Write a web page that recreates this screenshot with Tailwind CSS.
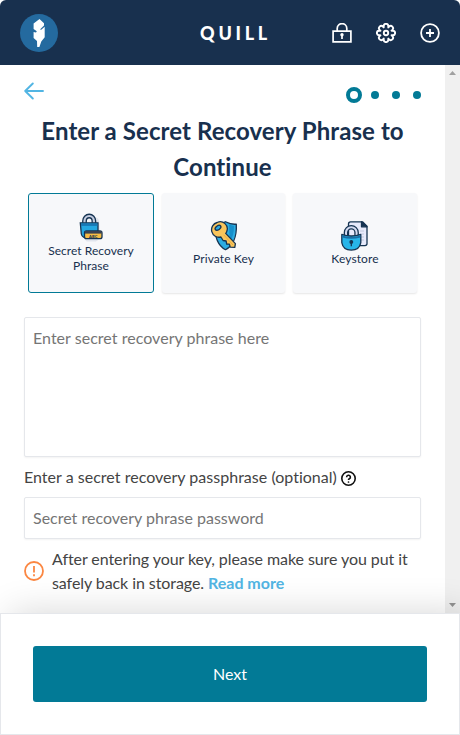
<!DOCTYPE html>
<html lang="en">
<head>
<meta charset="utf-8">
<title>Quill</title>
<script src="https://cdn.jsdelivr.net/npm/@tailwindcss/browser@4"></script>
</head>
<body class="bg-white font-[Lato,sans-serif] text-[#444] [font-variant-ligatures:none]">
<div class="flex h-[735px] w-[460px] flex-col overflow-hidden">
  <header class="grid h-[65px] shrink-0 grid-cols-[1fr_auto_1fr] items-center rounded-t-[6px] bg-[#18304e] pr-5 pl-5">
    <svg class="size-[38px]" viewBox="0 0 38 38"><circle cx="19" cy="19" r="19" fill="#246a9f"/><path d="M19.5 5 24 9.300v2.200L20 15.500l1.200.3 3.500-3v10.400L21.300 27.500 19.400 33h-2.200L17 27l-3.400-3v-6l2.400.5.8-1.200-3.200-2.300V9.600z" fill="#fff"/></svg>
    <h1 class="pl-[11px] text-[18px] leading-6 font-black tracking-[3.7px] text-white">QUILL</h1>
    <div class="flex items-center justify-end gap-6">
      <svg class="size-5" viewBox="0 0 20 20" fill="none" stroke="#fff" stroke-width="1.7"><path d="M1.1 8.1h17.8v10.8H1.1zM5.2 8V5.4a4.8 4.8 0 0 1 9.6 0V8"/><circle cx="10" cy="11.8" r="1.7" fill="#fff" stroke="none"/><path d="M10 12v4"/></svg>
      <svg class="size-5" viewBox="0 0 20 20" fill="none" stroke="#fff" stroke-width="1.9" stroke-linejoin="round"><path d="M7.7 4.45L7.7 3.2a2.3 2.3 0 0 1 4.6 0V4.45l.880-.880a2.3 2.3 0 0 1 3.250 3.250l-.880.880h1.250a2.3 2.3 0 0 1 0 4.600h-1.250l.880.880a2.3 2.3 0 0 1-3.250 3.250l-.880-.880v1.250a2.3 2.3 0 0 1-4.600 0v-1.250l-.880.880a2.3 2.3 0 0 1-3.250-3.250l.880-.880H3.200a2.3 2.3 0 0 1 0-4.600h1.250l-.880-.880a2.3 2.3 0 0 1 3.250-3.250z"/><circle cx="10" cy="10" r="2.200"/></svg>
      <svg class="size-5" viewBox="0 0 20 20" fill="none" stroke="#fff" stroke-width="1.8"><circle cx="10" cy="10" r="8.9"/><path d="M10 6v8M6 10h8"/></svg>
    </div>
  </header>

  <div class="flex h-[548px] shrink-0">
    <main class="w-[445px] px-6">
      <div class="flex h-12 items-start justify-between">
        <svg class="mt-[17px] h-[18px] w-5" viewBox="0 0 20 18" fill="none" stroke="#52b5e3" stroke-width="1.9" stroke-linecap="round" stroke-linejoin="round"><path d="M19 9H1.2M8.8 1.5 1.2 9l7.6 7.5"/></svg>
        <div class="mt-[22px] flex items-center">
          <span class="size-4 rounded-full border-4 border-[#027a96]"></span>
          <span class="ml-[9px] size-2 rounded-full bg-[#027a96]"></span>
          <span class="ml-[13px] size-2 rounded-full bg-[#027a96]"></span>
          <span class="ml-[13px] size-2 rounded-full bg-[#027a96]"></span>
        </div>
      </div>
      <h2 class="text-center text-2xl leading-9 font-bold tracking-[0.08px] text-[#18304e]">Enter a Secret Recovery Phrase to Continue</h2>
      <div class="mt-2 ml-1 flex h-[100px] text-center text-xs leading-[15px] tracking-[0.1px] text-[#18304e]">
        <button class="flex w-[126px] flex-col items-center rounded-[3px] border border-[#027a96] bg-[#f7f8fa] pt-[18px]">
          <svg class="-mb-px h-8 w-8" viewBox="0 0 32 32"><path d="M21 5.5q3 .5 3.2 5l.6 8 1 3v5l-5 3h-9l-3-3z" fill="#e1e5ed"/><path d="M9.500 12V9a4.700 5 0 0 1 9.400 0v3" fill="none" stroke="#163452" stroke-width="4.800"/><path d="M9.500 12V9a4.700 5 0 0 1 9.400 0v3" fill="none" stroke="#c5cde0" stroke-width="2.200"/><path d="M5.300 10.800h17.700v11.500q-1 4-8.500 4T6.300 22z" fill="#24a7e1" stroke="#163452" stroke-width="1.300"/><path d="M6 11.400h16.400v2.500H6z" fill="#1878b5"/><rect x="9.500" y="19" width="17.500" height="7.700" rx="2" fill="#f7bd45" stroke="#163452" stroke-width="1.300"/><path d="M10 19h16.500v2.600H10z" fill="#384253"/><text x="18.200" y="25.600" text-anchor="middle" font-family="Lato" font-size="4" font-weight="900" fill="#163452">ABC</text></svg>
          <span class="tracking-[0.04px]">Secret Recovery<br>Phrase</span>
        </button>
        <button class="ml-2 flex w-[123px] flex-col items-center rounded-[3px] bg-[#f7f8fa] pt-[27px] shadow-[0_1px_2px_rgba(0,0,0,0.1)]">
          <svg class="h-[31px] w-8" viewBox="0 0 32 31" stroke="#163452" stroke-width="1.3" stroke-linejoin="round"><path d="M17.500 1.700Q23 4.700 28.300 4.200C29 17 24.500 26 17.500 29.700 10.500 26 6.500 18 6.800 4.200Q12 4.700 17.500 1.700z" fill="#2bace2"/><path d="m21 4.500 5 1.400c.1 7-1.700 12.200-4.200 16z" fill="#168fcb" stroke="none"/><path d="M9.200 2.500a7 7 0 0 1 9.600 8.800q-.3 1.200-1.100 2.100l9.700 10.200-.6 3.800-4.600-.3-.8-3-2.700-.1-.6-3-3-.5-2.200-3.500A7 7 0 1 1 9.200 2.500z" fill="#f9c55b"/><ellipse cx="10" cy="7.800" rx="3.200" ry="2" transform="rotate(-35 10 7.800)" fill="#2bace2"/><path d="m15.600 14.800 9.400 10.200" stroke="#d99832" stroke-width=".6"/></svg>
          <span>Private Key</span>
        </button>
        <button class="ml-[8px] flex w-[124px] flex-col items-center rounded-[3px] bg-[#f7f8fa] pt-[27px] shadow-[0_1px_2px_rgba(0,0,0,0.1)]">
          <svg class="h-[31px] w-8" viewBox="0 0 32 31" stroke="#163452" stroke-width="1.3" stroke-linejoin="round"><path d="M11.500 1.800h12l4.500 4.500v17.500q0 1.800-2 1.800H11.500q-2 0-2-2V4q0-2.200 2-2.200z" fill="#e7eafb"/><path d="M22.500 1.800v5H28z" fill="#163452"/><path d="M21 11h4M22 14h3M22 17h3M22 20h3" stroke="#b6bfd5" stroke-width=".8"/><path d="M7 16v-3.500a5.300 5.300 0 0 1 10.600 0V16" fill="none" stroke-width="4.600"/><path d="M7 16v-3.500a5.300 5.300 0 0 1 10.600 0V16" fill="none" stroke="#d3daf0" stroke-width="2"/><path d="M2.800 14.400q9.500 3.200 19 0v8.200q-1.300 7.500-9.500 7.500t-9.500-7.500z" fill="#27b5e9"/><path d="M3.300 15.400q9 3 18 0v2q-9 2.800-18 0z" fill="#176da5" stroke="none"/><circle cx="12.300" cy="22" r="1.300" fill="#163452"/><path d="M12.300 22v4.200"/></svg>
          <span>Keystore</span>
        </button>
      </div>
      <textarea class="mt-6 block h-[140px] w-full resize-none rounded-[2px] border border-[#e5e7eb] bg-white px-2 py-2 text-base leading-6 tracking-[0.03px] text-[#444] shadow-[0_1px_2px_rgba(0,0,0,0.05)] placeholder:text-[#757575]" placeholder="Enter secret recovery phrase here"></textarea>
      <label class="mt-2 flex h-6 items-center text-base leading-6 tracking-[0.02px]">Enter a secret recovery passphrase (optional)
        <svg class="mt-[2px] ml-1 size-[15px]" viewBox="0 0 15 15" fill="none" stroke="#111" stroke-width="1.6"><circle cx="7.5" cy="7.5" r="6.7"/><path d="M5.6 6.2a1.9 1.9 0 1 1 2.8 1.6q-.9.5-.9 1.3"/><circle cx="7.5" cy="11" r=".85" fill="#111" stroke="none"/></svg>
      </label>
      <input class="mt-2 block h-[42px] w-full rounded-[2px] border border-[#e5e7eb] bg-white px-2 pb-[2px] text-base text-[#444] shadow-[0_1px_2px_rgba(0,0,0,0.05)] placeholder:text-[#757575]" placeholder="Secret recovery phrase password">
      <div class="mt-2 flex items-center gap-2 text-base leading-6 tracking-[-0.075px]">
        <svg class="size-5 shrink-0" viewBox="0 0 20 20" fill="none" stroke="#fb8742" stroke-width="1.8"><circle cx="10" cy="10" r="9"/><path d="M10 5v6.5M10 13.2v2"/></svg>
        <p>After entering your key, please make sure you put it<br>safely back in storage. <a class="inline-block font-bold tracking-normal text-[#52b5e3]">Read more</a></p>
      </div>
    </main>
    <div class="flex w-[15px] flex-col items-center justify-between bg-[#f0f0f0] py-[6px]">
      <svg class="h-[4px] w-[7px]" viewBox="0 0 7 4"><path d="M0 4 3.5 0 7 4z" fill="#a0a0a0"/></svg>
      <svg class="h-[4px] w-[7px]" viewBox="0 0 7 4"><path d="M0 0h7L3.5 4z" fill="#929292"/></svg>
    </div>
  </div>

  <footer class="relative h-[122px] shrink-0 border border-[#e5e7eb] bg-white px-8 pt-8 shadow-[10px_0_35px_rgba(0,0,0,0.16)]">
    <button class="h-14 w-[394px] rounded-[3px] bg-[#027a96] text-base text-white">Next</button>
  </footer>
</div>
</body>
</html>
